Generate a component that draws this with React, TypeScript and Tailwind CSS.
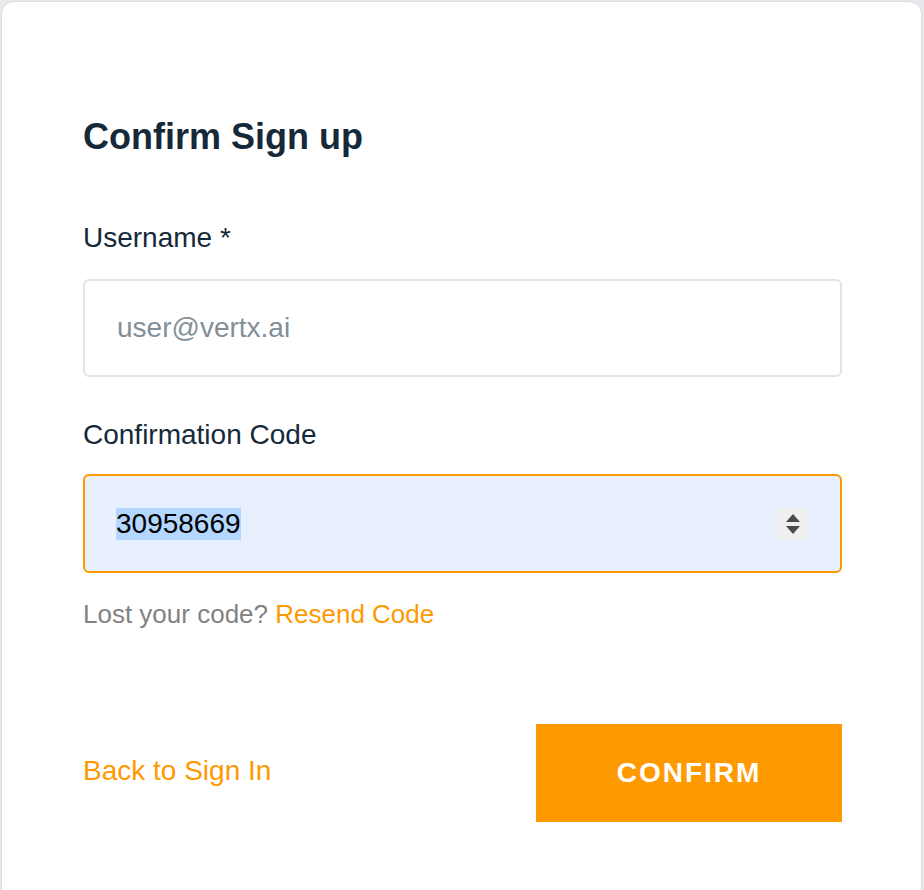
import React from "react";

export default function App() {
  const font = { fontFamily: '"Liberation Sans", Arial, Helvetica, sans-serif' };
  return (
    <div className="w-[924px] h-[890px] overflow-hidden bg-[#e8e8ed]" style={font}>
      <div className="ml-[2px] mt-[2px] w-[919px] h-[920px] bg-white rounded-[12px] shadow-[0_0_2px_rgba(0,0,0,0.15)] pl-[81px] pr-[79px] pt-[113px] flex flex-col">
        <h1 className="text-[36px] leading-[44px] font-bold text-[#152939]">Confirm Sign up</h1>

        <label className="mt-[63px] text-[28px] leading-[32px] text-[#152939]">Username *</label>
        <div className="mt-[25px] h-[98px] border-2 border-[#e1e4e8] rounded-[6px] flex items-center pl-[32px]">
          <span className="text-[28px] text-[#828f99]">user@vertx.ai</span>
        </div>

        <label className="mt-[42px] text-[28px] leading-[32px] text-[#152939]">Confirmation Code</label>
        <div className="mt-[23px] h-[99px] border-2 border-[#ff9900] rounded-[6px] bg-[#e8f0fe] flex items-center pl-[31px] pr-[32px]">
          <span className="text-[28px] leading-[32px] text-black bg-[#b3d7fe]">30958669</span>
          <div className="ml-auto w-[30px] h-[32px] bg-[#efefef] flex flex-col items-center justify-center gap-[4px]">
            <svg width="14" height="8" viewBox="0 0 14 8"><polygon points="7,0 14,8 0,8" fill="#4b4b4b" /></svg>
            <svg width="14" height="8" viewBox="0 0 14 8"><polygon points="0,0 14,0 7,8" fill="#4b4b4b" /></svg>
          </div>
        </div>

        <div className="mt-[26px] text-[26px] leading-[30px] text-[#828282]">
          Lost your code? <span className="text-[#ff9900]">Resend Code</span>
        </div>

        <div className="mt-[95px] flex items-center justify-between">
          <span className="text-[28px] leading-[32px] text-[#ff9900] -mt-[4px]">Back to Sign In</span>
          <button className="w-[306px] h-[98px] bg-[#ff9900] text-white text-[28px] font-bold tracking-[2px]">CONFIRM</button>
        </div>
      </div>
    </div>
  );
}
